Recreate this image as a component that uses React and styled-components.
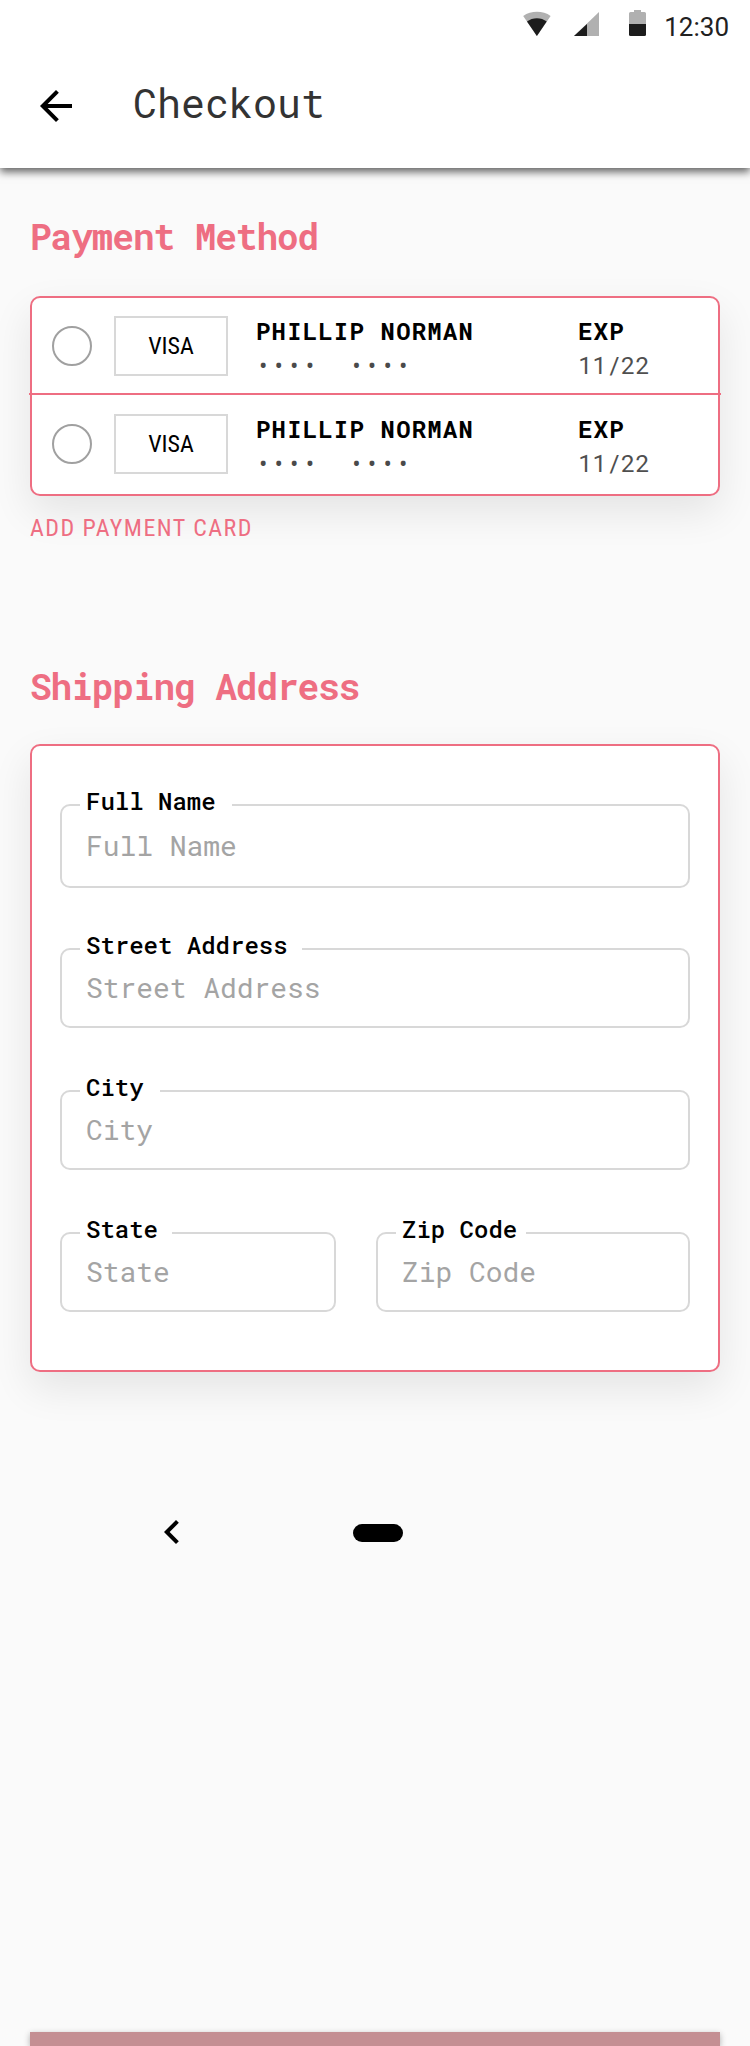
import React from "react";
import styled, { createGlobalStyle } from "styled-components";

const GlobalStyle = createGlobalStyle`
  *, *::before, *::after { box-sizing: border-box; }
  body { margin: 0; background: #fafafa; }
`;

const mono = `"Roboto Mono", "DejaVu Sans Mono", monospace`;
const sans = `Roboto, "Liberation Sans", sans-serif`;
const condensed = `"Roboto Condensed", Roboto, sans-serif`;
const pink = "#ee6e82";

const Page = styled.div`
  display: flex;
  flex-direction: column;
  width: 750px;
  height: 2046px;
  overflow: hidden;
  background: #fafafa;
  font-family: ${mono};
`;

const Header = styled.header`
  flex: none;
  height: 168px;
  background: #fff;
  box-shadow: 0 4px 8px rgba(0, 0, 0, 0.6);
`;

const StatusBar = styled.div`
  display: flex;
  justify-content: flex-end;
  align-items: flex-start;
  height: 54px;
  padding: 10px 21px 0 0;
`;

const StatusIcon = styled.svg`
  display: block;
  width: ${(p) => p.$w}px;
  height: 26px;
  margin-right: ${(p) => p.$gap}px;
`;

const Time = styled.span`
  font: 400 26px/30px ${sans};
  color: #212121;
  padding-top: 2px;
`;

const AppBar = styled.div`
  display: flex;
  padding: 28px 32px 0;
`;

const BackIcon = styled.svg`
  width: 48px;
  height: 48px;
`;

const Title = styled.h1`
  margin: -3px 0 0 53px;
  font: 400 40px/48px ${mono};
  color: #333;
`;

const Main = styled.main`
  flex: 1;
  display: flex;
  flex-direction: column;
  align-items: flex-start;
  padding: 44px 30px 0;
`;

const Heading = styled.h2`
  margin: 0 0 ${(p) => p.$gap}px;
  font: 700 36px/48px ${mono};
  letter-spacing: -1.02px;
  color: ${pink};
`;

const Card = styled.section`
  width: 690px;
  border: 2px solid ${pink};
  border-radius: 10px;
  background: #fff;
  box-shadow: 0 16px 40px rgba(0, 0, 0, 0.09);
`;

const PaymentRow = styled.div`
  display: flex;
  align-items: flex-start;
  height: 98px;
  padding: 18px 0 0 20px;

  & + & {
    margin: -3px -3px 0;
    height: 101px;
    padding: 19px 3px 0 23px;
    border-top: 2px solid ${pink};
  }
`;

const Radio = styled.span`
  width: 40px;
  height: 40px;
  margin: 10px 22px 0 0;
  border: 2px solid #a0a0a0;
  border-radius: 50%;
`;

const Brand = styled.div`
  display: flex;
  align-items: center;
  justify-content: center;
  width: 114px;
  height: 60px;
  margin-right: 28px;
  border: 2px solid #d8d8d8;
`;

const BrandName = styled.span`
  font: 400 24px/28px ${condensed};
`;

const Detail = styled.div`
  width: ${(p) => p.$w}px;
`;

const DetailTitle = styled.div`
  margin-top: -1px;
  font: 700 24px/32px ${mono};
  letter-spacing: 1.17px;
  white-space: nowrap;
`;

const Digits = styled.div`
  margin-top: 2px;
  font: 400 24px/32px ${mono};
  letter-spacing: 1.15px;
  color: #4a4a4a;
  white-space: pre;
`;

const Expiry = styled.div`
  font: 400 24px/32px ${mono};
  letter-spacing: -0.05px;
  color: #4f4f4f;
  margin-top: 2px;
`;

const AddCard = styled.button`
  margin: 18px 0 120px;
  padding: 0;
  border: 0;
  height: 28px;
  background: none;
  font: 400 24px/28px ${condensed};
  letter-spacing: 1.44px;
  color: ${pink};
`;

const AddressCard = styled(Card)`
  display: flex;
  flex-direction: column;
  height: 628px;
  padding: 58px 28px 0;
`;

const FieldRow = styled.div`
  display: flex;
  gap: 40px;
  margin-bottom: ${(p) => p.$gap || 62}px;
`;

const Field = styled.label`
  position: relative;
  width: ${(p) => p.$w || 630}px;
  height: ${(p) => p.$h || 80}px;
  padding: ${(p) => (p.$h ? 22 : 20)}px 24px 0;
  border: 2px solid #d8d8d8;
  border-radius: 10px;
`;

const FieldLabel = styled.span`
  position: absolute;
  left: 18px;
  top: -21px;
  width: ${(p) => p.$w}px;
  padding-left: 6px;
  background: #fff;
  font: 500 24px/32px ${mono};
  white-space: nowrap;
`;

const Placeholder = styled.span`
  display: block;
  font: 400 28px/36px ${mono};
  letter-spacing: -0.05px;
  color: #a4a4a4;
  white-space: nowrap;
`;

const NavBar = styled.nav`
  display: flex;
  align-items: center;
  gap: 157px;
  height: 48px;
  margin: 136px 0 0 118px;
`;

const NavBack = styled.svg`
  width: 48px;
  height: 48px;
`;

const HomePill = styled.span`
  width: 50px;
  height: 18px;
  margin-top: 2px;
  border-radius: 9px;
  background: #000;
`;

const BottomButton = styled.div`
  flex: none;
  height: 14px;
  margin: 0 30px;
  background: #c48f93;
  box-shadow: 0 2px 6px rgba(0, 0, 0, 0.3);
`;

const cards = [
  { id: 1, name: "PHILLIP NORMAN", exp: "11/22" },
  { id: 2, name: "PHILLIP NORMAN", exp: "11/22" },
];

function TextField({ text, gap, w, h }) {
  return (
    <Field $w={w} $h={h}>
      <FieldLabel $w={gap}>{text}</FieldLabel>
      <Placeholder>{text}</Placeholder>
    </Field>
  );
}

export default function App() {
  return (
    <Page>
      <GlobalStyle />
      <Header>
        <StatusBar>
          <StatusIcon $w={28} $gap={23} viewBox="0 0 28 26">
            <path d="M0.2 6C8 .4 20 .4 27.6 6L13.9 26z" fill="#b0b0b0" />
            <path d="M4 11.6C9.5 7 18.3 7 23.7 11.6L13.9 26z" fill="#1c1c1c" />
          </StatusIcon>
          <StatusIcon $w={26} $gap={29} viewBox="0 0 26 26">
            <path d="M25 2v24H0z" fill="#b0b0b0" />
            <path d="M13 14v12H0z" fill="#1c1c1c" />
          </StatusIcon>
          <StatusIcon $w={17} $gap={18.3} viewBox="0 0 17 26">
            <path d="M5 0h7v2h3.5Q17 2 17 3.5V14H0V3.5Q0 2 1.5 2H5z" fill="#b0b0b0" />
            <path d="M0 14h17v10.5q0 1.5-1.5 1.5h-14Q0 26 0 24.5z" fill="#1c1c1c" />
          </StatusIcon>
          <Time>12:30</Time>
        </StatusBar>
        <AppBar>
          <BackIcon viewBox="0 0 24 24">
            <path d="M20 11H7.83l5.59-5.59L12 4l-8 8 8 8 1.41-1.41L7.83 13H20z" />
          </BackIcon>
          <Title>Checkout</Title>
        </AppBar>
      </Header>
      <Main>
        <Heading $gap={36}>Payment Method</Heading>
        <Card>
          {cards.map((c) => (
            <PaymentRow key={c.id}>
              <Radio />
              <Brand>
                <BrandName>VISA</BrandName>
              </Brand>
              <Detail $w={322}>
                <DetailTitle>{c.name}</DetailTitle>
                <Digits>{"••••  ••••"}</Digits>
              </Detail>
              <Detail $w={100}>
                <DetailTitle>EXP</DetailTitle>
                <Expiry>{c.exp}</Expiry>
              </Detail>
            </PaymentRow>
          ))}
        </Card>
        <AddCard>ADD PAYMENT CARD</AddCard>
        <Heading $gap={34}>Shipping Address</Heading>
        <AddressCard>
          <FieldRow $gap={60}>
            <TextField text="Full Name" gap={152} h={84} />
          </FieldRow>
          <FieldRow>
            <TextField text="Street Address" gap={222} />
          </FieldRow>
          <FieldRow>
            <TextField text="City" gap={80} />
          </FieldRow>
          <FieldRow>
            <TextField text="State" gap={92} w={276} />
            <TextField text="Zip Code" gap={130} w={314} />
          </FieldRow>
        </AddressCard>
        <NavBar>
          <NavBack viewBox="0 0 24 24">
            <path d="M15.41 7.41L14 6l-6 6 6 6 1.41-1.41L10.83 12z" />
          </NavBack>
          <HomePill />
        </NavBar>
      </Main>
      <BottomButton />
    </Page>
  );
}
